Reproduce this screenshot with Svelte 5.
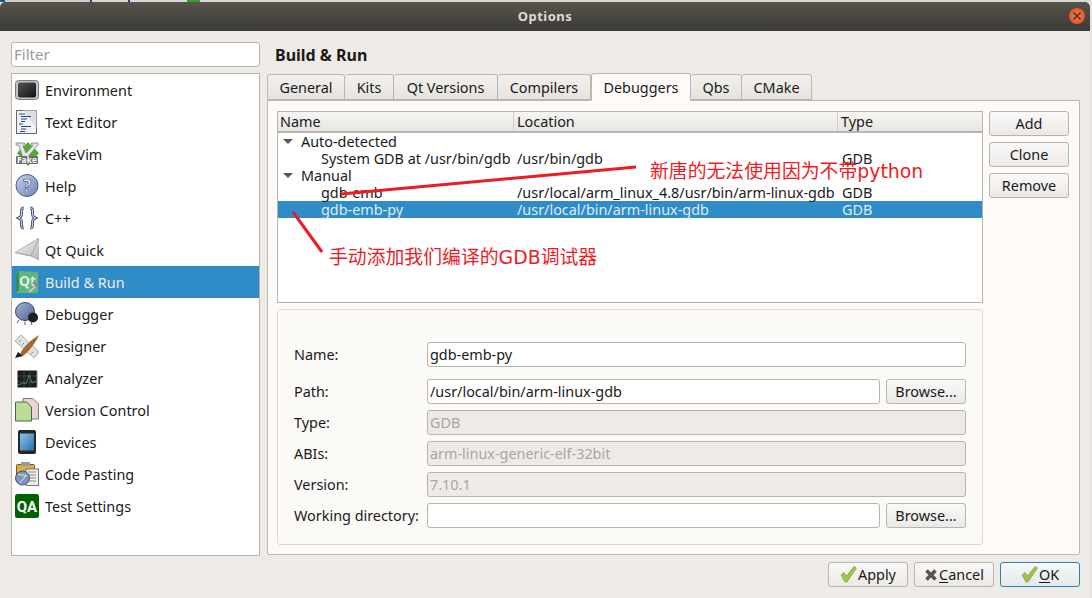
<script>
  const nav = ['Environment','Text Editor','FakeVim','Help','C++','Qt Quick','Build & Run','Debugger','Designer','Analyzer','Version Control','Devices','Code Pasting','Test Settings'];
  const tabs = ['General','Kits','Qt Versions','Compilers','Debuggers','Qbs','CMake'];
</script>

<div class="win">
  <div class="strip"></div>
  <div class="title">Options<span class="close"><svg width="10" height="10" viewBox="0 0 10 10"><path d="M1.500 1.500l7 7M8.500 1.500l-7 7" stroke="#4a2a1c" stroke-width="1.400" fill="none"/></svg></span></div>
  <div class="body">
    <div class="main">
      <aside class="side">
        <input class="filter" placeholder="Filter" />
        <ul class="nav">
          {#each nav as n, i}
            <li class:sel={i === 6}>
              <span class="ic">
                <svg width="24" height="24" viewBox="0 0 24 24">
                  <defs>
                    <linearGradient id={'g' + i} x1="0" y1="0" x2="1" y2="1">
                      <stop offset="0" stop-color={i === 3 ? '#c6d2ea' : i === 5 ? '#f4f4f4' : i === 7 ? '#a3b4d8' : i === 11 ? '#8cc4ea' : '#555'} />
                      <stop offset="1" stop-color={i === 3 ? '#6d84b4' : i === 5 ? '#b8b8b8' : i === 7 ? '#53658f' : i === 11 ? '#2a6ea8' : '#111'} />
                    </linearGradient>
                  </defs>
                  {#if i === 0}
                    <rect x=".5" y="2.500" width="23" height="19" rx="3" fill="#c4c4c4" stroke="#7a7a7a"/>
                    <rect x="3" y="4.500" width="18" height="15" rx="2" fill="url(#g0)"/>
                  {:else if i === 1}
                    <rect x="1.500" y=".5" width="20" height="23" fill="#f3f3f3" stroke="#5f6880"/>
                    <path d="M8 .5L21.500 18V.5z" fill="#dcdde0"/>
                    <path d="M4 4h6M6 6.500h10M6 9h6M6 11.500h4M4 14h4M6 16.500h10M6 19h5M5 21.500h5" stroke="#24468c" stroke-width="1"/>
                  {:else if i === 2}
                    <path d="M13 0l11 11-11 13L2 11z" fill="#4fae2e"/>
                    <path d="M1 1h8.500v1.500L8 3.500 11 11 18 3.500 16.500 2.500V1H23v2L11 17H8L4 3.500 1 3z" fill="#e4e4e4" stroke="#6a6a6a" stroke-width=".7"/>
                    <rect x="1" y="14" width="22" height="8" rx="1" fill="#6d6d6d"/>
                    <text x="12" y="21" class="fk">Fake</text>
                  {:else if i === 3}
                    <circle cx="12" cy="11.500" r="11" fill="url(#g3)" stroke="#465a8a"/>
                    <text x="12" y="18" class="q">?</text>
                  {:else if i === 4}
                    <path d="M9 3C6 3 6.500 5 6.500 8.500S5.500 12 3.500 13c2 1 3 1 3 4.500S6 23 9 23M15 3c3 0 2.500 2 2.500 5.500s1 3.500 3 4.500c-2 1-3 1-3 4.500s.5 5.500-2.500 5.500" fill="none" stroke="#4a5a7c" stroke-width="3" transform="translate(0 -1)"/>
                    <path d="M9 3C6 3 6.500 5 6.500 8.500S5.500 12 3.500 13c2 1 3 1 3 4.500S6 23 9 23M15 3c3 0 2.500 2 2.500 5.500s1 3.500 3 4.500c-2 1-3 1-3 4.500s.5 5.500-2.500 5.500" fill="none" stroke="#e8ecf4" stroke-width="1" transform="translate(0 -1)"/>
                  {:else if i === 5}
                    <path d="M0 14.500L24 0v22l-8-4z" fill="url(#g5)" stroke="#a0a0a0" stroke-width=".7"/>
                    <path d="M0 14.500l16 3.500L24 0" fill="none" stroke="#9a9a9a" stroke-width=".7"/>
                  {:else if i === 6}
                    <path d="M4 1l19 1v21H1V4z" fill="#5fb57c"/>
                    <path d="M1 4l3-3v19l-3 3z" fill="#3c8a56"/>
                    <text x="12.500" y="16" class="qt">Qt</text>
                    <path d="M14 22l7-6" stroke="#c9c9c9" stroke-width="2"/>
                    <path d="M18 12l5 5" stroke="#8a8a8a" stroke-width="2.500"/>
                  {:else if i === 7}
                    <ellipse cx="10" cy="9.500" rx="9.500" ry="9" fill="url(#g7)" stroke="#36436a"/>
                    <circle cx="18" cy="15.500" r="5" fill="#1f1f1f"/>
                    <path d="M4 18l-2 3M10 19.500v3.500M16 20l1 3" stroke="#555"/>
                  {:else if i === 8}
                    <path d="M0 7L6 1l18 17-5 6z" fill="#dfe2e5" stroke="#8a8a8a" stroke-width=".7"/>
                    <path d="M6 6l-2 2M9 9l-2 2M12 12l-2 2M15 15l-2 2M18 18l-2 2" stroke="#7a7a7a" stroke-width=".8"/>
                    <path d="M5 20C8 13 16 6 24 1 21 9 13 18 8 22z" fill="#a5682a"/>
                    <path d="M0 24l3-6 5 4z" fill="#1c1c1c"/>
                  {:else if i === 9}
                    <rect x="2.500" y="4.500" width="19.500" height="17" rx="1" fill="#1c1c1c" stroke="#8a8a8a"/>
                    <path d="M9 5v16M15 5v16M3 10h18M3 16h18" stroke="#4c6a66" stroke-width=".6" fill="none"/>
                    <path d="M3 19l5-2 3 1 3-9 3 8 4-2" stroke="#6a9a8a" stroke-width=".7" fill="none"/>
                  {:else if i === 10}
                    <path d="M8 .5h10l5.500 5.500v15H8z" fill="#e8d4d4" stroke="#8a7a7a"/>
                    <path d="M.5 4h11l5 5v14H.5z" fill="#bcdc9a" stroke="#4a6a3a"/>
                  {:else if i === 11}
                    <rect x="3" y="0" width="18" height="24" rx="2" fill="#262626"/>
                    <rect x="5" y="3.500" width="14" height="17" fill="url(#g11)"/>
                  {:else if i === 12}
                    <rect x="1.500" y="2.500" width="18" height="17" rx="1" fill="#d8b248" stroke="#6a5a2a"/>
                    <rect x="6" y="0" width="9" height="4" fill="#999"/>
                    <rect x="11" y="7" width="12.500" height="16.500" fill="#eee" stroke="#777"/>
                    <path d="M13 10h8M13 13h8M13 16h8M13 19h8" stroke="#888"/>
                    <circle cx="7.500" cy="16" r="7" fill="#7f93bf" stroke="#556"/>
                    <path d="M3 12c3 2 6 0 9 2M5 21c1-3 4-3 5-7" stroke="#e4e8f0" stroke-width="1" fill="none"/>
                  {:else}
                    <rect width="24" height="24" rx="2.500" fill="#006100"/>
                    <text x="12" y="17.500" class="qa">QA</text>
                  {/if}
                </svg>
              </span>
              <span class="lbl">{n}</span>
            </li>
          {/each}
        </ul>
      </aside>

      <section class="right">
        <h1>Build &amp; Run</h1>
        <div class="tabs">
          {#each tabs as t, i}
            <span class="tab" class:on={i === 4}>{t}</span>
          {/each}
        </div>
        <div class="pane">
          <div class="top">
            <div class="tree">
              <div class="head"><span class="c1">Name</span><span class="c2">Location</span><span class="c3">Type</span></div>
              <div class="row"><span class="c1 g"><i class="tri"></i>Auto-detected</span></div>
              <div class="row"><span class="c1 l">System GDB at /usr/bin/gdb</span><span class="c2">/usr/bin/gdb</span><span class="c3">GDB</span></div>
              <div class="row"><span class="c1 g"><i class="tri"></i>Manual</span></div>
              <div class="row"><span class="c1 l">gdb-emb</span><span class="c2">/usr/local/arm_linux_4.8/usr/bin/arm-linux-gdb</span><span class="c3">GDB</span></div>
              <div class="row cur"><span class="c1 l">gdb-emb-py</span><span class="c2">/usr/local/bin/arm-linux-gdb</span><span class="c3">GDB</span></div>
            </div>
            <div class="btns">
              <button>Add</button><button>Clone</button><button>Remove</button>
            </div>
          </div>
          <div class="group">
            <div class="f f1"><label for="a">Name:</label><input id="a" value="gdb-emb-py" /></div>
            <div class="f"><label for="b">Path:</label><input id="b" value="/usr/local/bin/arm-linux-gdb" /><button>Browse...</button></div>
            <div class="f"><label for="c">Type:</label><input id="c" disabled value="GDB" /></div>
            <div class="f"><label for="d">ABIs:</label><input id="d" disabled value="arm-linux-generic-elf-32bit" /></div>
            <div class="f"><label for="e">Version:</label><input id="e" disabled value="7.10.1" /></div>
            <div class="f"><label for="g">Working directory:</label><input id="g" /><button>Browse...</button></div>
          </div>
        </div>
      </section>
    </div>
    <div class="foot">
      <button class="dlg"><svg class="ck" width="17" height="17" viewBox="0 0 17 17"><path d="M1 9l3-2.500 2.500 3.500L14 0.500l2.500 1.500L7 16H5z" fill="#9cc83c" stroke="#7a8a5a" stroke-width=".6"/></svg>Apply</button>
      <button class="dlg"><svg class="ck" width="14" height="14" viewBox="0 0 14 14"><path d="M2.500 2.500l9 9M11.500 2.500l-9 9" stroke="#555" stroke-width="3.600" fill="none"/></svg><span><u>C</u>ancel</span></button>
      <button class="dlg def"><svg class="ck" width="17" height="17" viewBox="0 0 17 17"><path d="M1 9l3-2.500 2.500 3.500L14 0.500l2.500 1.500L7 16H5z" fill="#9cc83c" stroke="#7a8a5a" stroke-width=".6"/></svg><span><u>O</u>K</span></button>
    </div>
  </div>

  <svg class="marks" width="1092" height="598" viewBox="0 0 1092 598">
    <path d="M341 194L636 167" stroke="#ed1c24" stroke-width="3" fill="none"/>
    <path d="M293 212L322 252" stroke="#ed1c24" stroke-width="3" fill="none"/>
  </svg>
  <span class="note n1">新唐的无法使用因为不带python</span>
  <span class="note n2">手动添加我们编译的GDB调试器</span>
  <span class="edge"></span>
</div>

<style>
  :global(body) { margin: 0; background: #eeebe7; }
  :global(*) { box-sizing: border-box; }
  .win { position: relative; width: 1092px; height: 598px; overflow: hidden; background: #eeebe7; color: #1a1a1a; font: 14.4px/18px "Noto Sans", "Noto Sans CJK SC", sans-serif; border-right: 2px solid #e6e3de; }
  .edge { position: absolute; left: 1090px; top: 500px; width: 2px; height: 25px; background: #2a2a2a; }
  .strip { height: 2px; background: linear-gradient(90deg, #1c5a86 0 5px, #cfcfca 5px 90px, #2a3aa0 90px 92px, #d8d8d4 92px 128px, #2a3aa0 128px 130px, #d8d8d4 130px 187px, #3a9a3a 187px 200px, #d8d8d4 200px); }
  .title { position: relative; height: 29px; background: linear-gradient(#57534b, #3c3b37); border-radius: 5px 5px 0 0; color: #dfdbd2; font-weight: 700; font-size: 13px; letter-spacing: .5px; line-height: 28px; text-align: center; }
  .close { position: absolute; right: 5px; top: 6px; width: 16px; height: 16px; border-radius: 50%; background: radial-gradient(#f08050, #d9481c); display: flex; align-items: center; justify-content: center; }
  .body { height: 567px; display: flex; flex-direction: column; padding: 11px 10px 0 11px; }
  .main { display: flex; gap: 7px; height: 514px; flex: none; }
  .side { width: 249px; display: flex; flex-direction: column; gap: 6px; flex: none; }
  .filter { height: 25px; border: 1px solid #b8b4ae; border-radius: 3px; padding: 0 2px 2px; font: inherit; font-size: 15px; background: #fff; outline: none; }
  .filter::placeholder { color: #999; }
  .nav { list-style: none; margin: 0; padding: 0; flex: 1; border: 1px solid #b8b4ae; background: #fff; }
  .nav li { height: 32px; display: flex; align-items: center; gap: 6px; padding-left: 3px; }
  .nav li.sel { background: #308cc6; color: #e8eef4; }
  .lbl { padding-top: 2px; letter-spacing: .03px; }
  .ic { width: 24px; height: 24px; display: block; }
  .ic svg { display: block; }
  .fk { font: 700 8.500px "Noto Sans", sans-serif; fill: #fff; text-anchor: middle; }
  .q { font: 700 17px "Noto Sans", sans-serif; fill: #e8ecf4; stroke: #3c4e7c; stroke-width: .6px; text-anchor: middle; }
  .qt { font: 700 14px "Noto Sans", sans-serif; fill: #d8f0e0; text-anchor: middle; }
  .qa { font: 700 15px "Roboto", sans-serif; fill: #fff; text-anchor: middle; }
  .right { flex: 1; display: flex; flex-direction: column; min-width: 0; }
  h1 { margin: 0; font-size: 16px; font-weight: 700; line-height: 26px; height: 32px; padding-left: 8px; flex: none; }
  .tabs { display: flex; height: 26px; flex: none; align-items: flex-end; position: relative; z-index: 1; }
  .tab { height: 26px; text-align: center; line-height: 25px; border: 1px solid #bab6b0; border-left-width: 0; border-radius: 3px 3px 0 0; background: linear-gradient(#f2f0ed, #e6e3df); }
  .tab:nth-child(1) { width: 78px; border-left-width: 1px; }
  .tab:nth-child(2) { width: 49px; }
  .tab:nth-child(3) { width: 104px; }
  .tab:nth-child(4) { width: 93px; }
  .tab:nth-child(5) { width: 100px; }
  .tab:nth-child(6) { width: 51px; }
  .tab:nth-child(7) { width: 70px; }
  .tab.on { height: 28px; line-height: 27px; background: #fdfaf7; border-bottom-color: #fdfaf7; border-left-width: 1px; margin-bottom: -1px; }
  .pane { height: 455px; flex: none; border: 1px solid #bab6b0; border-radius: 0 0 2px 2px; background: #fdfaf7; padding: 10px 9px 9px 9px; display: flex; flex-direction: column; gap: 6px; }
  .top { display: flex; gap: 6px; height: 192px; flex: none; }
  .tree { width: 706px; border: 1px solid #b8b4ae; background: #fff; }
  .head { height: 21px; display: flex; line-height: 20px; background: linear-gradient(#f6f5f3, #e8e5e1); border-bottom: 2px solid #b8b4ae; }
  .head span { padding-left: 3px; border-right: 1px solid #d0ccc6; }
  .head .c1 { width: 236px; padding-left: 2px; }
  .head .c2 { width: 324px; }
  .head .c3 { border: 0; }
  .row { height: 17px; display: flex; line-height: 17px; }
  .row .c1 { width: 239px; flex: none; }
  .row .c2 { width: 325px; flex: none; white-space: nowrap; }
  .c1.g { padding-left: 5px; display: flex; align-items: center; }
  .c1.l { padding-left: 43px; }
  .tri { width: 0; height: 0; border: 5px solid transparent; border-top: 5px solid #555; border-bottom: 0; margin-right: 8px; }
  .row.cur { background: #308cc6; color: #dcebf5; }
  .btns { width: 80px; display: flex; flex-direction: column; gap: 6px; }
  button { font: inherit; color: inherit; height: 25px; border: 1px solid #b8b4ae; border-radius: 3px; background: linear-gradient(#faf9f8, #ebe9e6); padding: 0; }
  .group { height: 236px; width: 706px; flex: none; border: 1px solid #dcd8d2; border-radius: 3px; background: #fbfaf7; padding: 32px 16px 0 16px; display: flex; flex-direction: column; gap: 6px; }
  .f { display: flex; align-items: center; height: 25px; flex: none; }
  .f label { width: 133px; flex: none; white-space: nowrap; }
  .f input { flex: 1; min-width: 0; height: 25px; border: 1px solid #b8b4ae; border-radius: 3px; padding: 0 2px; font: inherit; color: inherit; background: #fff; outline: none; }
  .f input:disabled { background: #eeebe7; color: #a8a6a2; }
  .f button { width: 80px; margin-left: 6px; flex: none; }
  .f1 { margin-bottom: 6px; }
  .foot { display: flex; justify-content: flex-end; gap: 6px; padding-top: 6px; }
  .dlg { width: 80px; display: flex; align-items: center; justify-content: center; gap: 1px; }
  u { text-underline-offset: 2px; }
  .dlg.def { border-color: #2f7eb0; background: linear-gradient(#f6f8f9, #e2e8ea); }
  .marks { position: absolute; left: 0; top: 0; pointer-events: none; }
  .note { position: absolute; color: #ed1c24; font: 18.85px/24px "DejaVu Sans", "Noto Sans CJK SC", sans-serif; white-space: nowrap; }
  .n1 { left: 650px; top: 160px; }
  .n2 { left: 329px; top: 246px; }
</style>
